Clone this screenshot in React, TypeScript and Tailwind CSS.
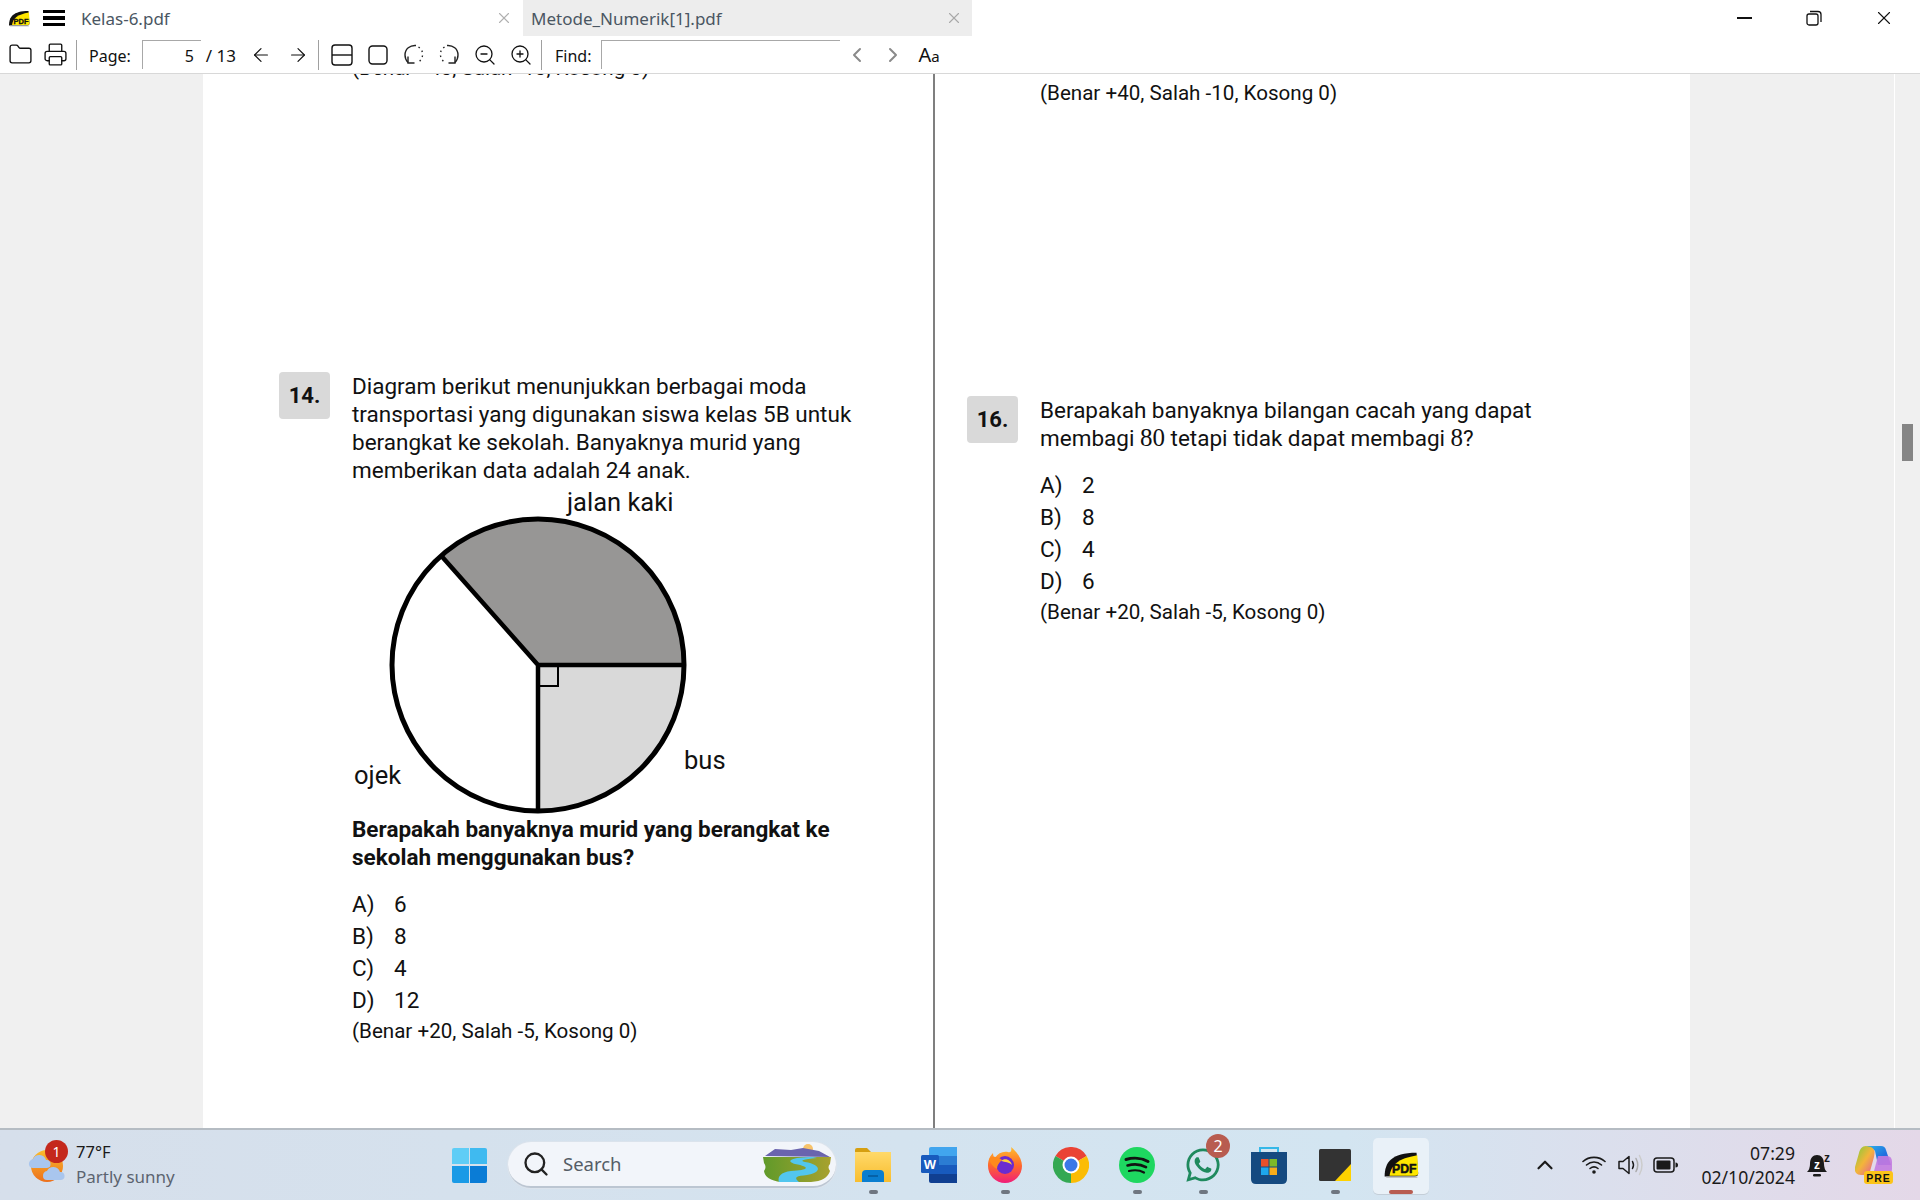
import { ArrowLeft, ArrowRight, ChevronLeft, ChevronRight, ChevronUp, Folder, Printer, Search, X, ZoomIn, ZoomOut } from 'lucide-react'
import { FaWhatsapp } from 'react-icons/fa'

const roboto = 'font-["Roboto",sans-serif]'
const ui = 'font-["Noto_Sans","Open_Sans",sans-serif]'

function PdfLogo({ w, h }: { w: number; h: number }) {
  return (
    <svg width={w} height={h} viewBox="0 0 44 34">
      <path d="M2 31C2 14 10 2 41 2L43 27Q43 31 39 31Z" fill="#111" />
      <path d="M8 30C10 17 18 9 42 5L43 27Q43 30 39 30Z" fill="#ffe600" />
      <path d="M4 32H42" stroke="#bbb" strokeWidth="1.5" />
      <text x="11" y="27" fontFamily="Liberation Sans" fontWeight="700" fontSize="15" stroke="#111" strokeWidth=".6" fill="#111">PDF</text>
    </svg>
  )
}

function SplitIcon() {
  return (
    <svg width="22" height="22" viewBox="0 0 22 22" fill="none" stroke="#111" strokeWidth="1.4">
      <rect x="1" y="1" width="20" height="20" rx="3" />
      <path d="M1 11H21" />
    </svg>
  )
}

function SquareIcon() {
  return (
    <svg width="20" height="20" viewBox="0 0 20 20" fill="none" stroke="#111" strokeWidth="1.4">
      <rect x="1" y="1" width="18" height="18" rx="3.5" />
    </svg>
  )
}

function RotateIcon({ flip }: { flip?: boolean }) {
  return (
    <svg width="21" height="21" viewBox="0 0 21 21" fill="none" stroke="#222" strokeWidth="1.4" className={flip ? '-scale-x-100' : ''}>
      <path d="M13 1.500C7 1 2 5 2 11C2 14 3 16.500 5 18.500" />
      <path d="M5 12.500V19H11.500" />
      <path d="M15.500 3C18.500 5 20 8 19.500 11.500C19 15 17 17.500 14 19" strokeDasharray="1.500 3.400" />
    </svg>
  )
}

function Restore() {
  return (
    <svg width="16" height="16" viewBox="0 0 16 16" fill="none" stroke="#111" strokeWidth="1.300">
      <rect x="1" y="4" width="11" height="11" rx="2" />
      <path d="M4 1.500H12Q15 1.500 15 4.500V12" />
    </svg>
  )
}

function Sep() {
  return <div className="h-[30px] w-px bg-[#a0a0a0]" />
}

function TitleBar() {
  return (
    <div className={`flex h-[36px] items-center ${ui}`}>
      <div className="ml-[8px] flex h-[20px] w-[22px] items-center"><PdfLogo w={22} h={17} /></div>
      <div className="ml-[13px] flex w-[22px] flex-col gap-[3px]">
        <div className="h-[3.500px] bg-black" />
        <div className="h-[3.500px] bg-black" />
        <div className="h-[3.500px] bg-black" />
      </div>
      <div className="ml-[16px] flex h-[36px] w-[442px] items-center justify-between pr-[10px] text-[17px] text-[#4a5662]">
        <span className="pt-[2px]">Kelas-6.pdf</span>
        <X size={18} strokeWidth={1.500} className="text-[#b0b0b0]" />
      </div>
      <div className="flex h-[36px] w-[449px] items-center justify-between bg-[#ededed] pr-[9px] pl-[8px] text-[17px] text-[#4a5662]">
        <span className="pt-[2px]">Metode_Numerik[1].pdf</span>
        <X size={18} strokeWidth={1.500} className="text-[#a8a8a8]" />
      </div>
      <div className="ml-auto flex items-center gap-[54px] pr-[28px]">
        <div className="h-[1.500px] w-[15px] bg-[#111]" />
        <Restore />
        <X size={22} strokeWidth={1.200} className="text-[#111] -mx-[3px]" />
      </div>
    </div>
  )
}

function Toolbar() {
  return (
    <div className={`flex h-[38px] items-center border-b border-[#d8d8d8] text-[16px] text-[#111] ${ui}`}>
      <Folder size={25} strokeWidth={1.300} className="ml-[8px]" />
      <Printer size={25} strokeWidth={1.300} className="ml-[10px]" />
      <div className="ml-[8px]"><Sep /></div>
      <span className="ml-[12px] pt-[2px]">Page:</span>
      <div className="ml-[11px] flex h-[29px] w-[59px] items-center justify-end border-t border-l border-[#a8a8a8] pt-[2px] pr-[7px]">5</div>
      <span className="ml-[5px] pt-[2px] text-[17px]">/ 13</span>
      <ArrowLeft size={22} strokeWidth={1.300} className="ml-[14px]" />
      <ArrowRight size={22} strokeWidth={1.300} className="ml-[15px]" />
      <div className="ml-[9px]"><Sep /></div>
      <div className="ml-[12px]"><SplitIcon /></div>
      <div className="ml-[15px]"><SquareIcon /></div>
      <div className="ml-[15px]"><RotateIcon /></div>
      <div className="ml-[15px]"><RotateIcon flip /></div>
      <ZoomOut size={24} strokeWidth={1.300} className="ml-[13px]" />
      <ZoomIn size={24} strokeWidth={1.300} className="ml-[12px]" />
      <div className="ml-[8px]"><Sep /></div>
      <span className="ml-[13px] pt-[2px]">Find:</span>
      <div className="ml-[10px] h-[29px] w-[239px] border-t border-l border-[#a8a8a8]" />
      <ChevronLeft size={24} strokeWidth={2} className="ml-[5px] text-[#8a8a8a]" />
      <ChevronRight size={24} strokeWidth={2} className="ml-[12px] text-[#8a8a8a]" />
      <span className="ml-[13px] text-[20px]">A<span className="text-[15px]">a</span></span>
    </div>
  )
}

function QNumber({ n }: { n: string }) {
  return (
    <div className="flex h-[47px] w-[51px] shrink-0 items-center justify-center rounded-[4px] bg-[#d9d9d9] text-[22px] font-bold text-[#111]">
      {n}
    </div>
  )
}

function Options({ items, score }: { items: [string, string][]; score: string }) {
  return (
    <div className="mt-[17px]">
      {items.map(([k, v]) => (
        <div key={k} className="flex h-[32px] items-center">
          <span className="w-[42px]">{k}</span>
          <span>{v}</span>
        </div>
      ))}
      <p className="mt-px text-[20.600px] leading-[28px]">{score}</p>
    </div>
  )
}

function PieChart() {
  return (
    <svg width="400" height="331" viewBox="0 0 400 331" className="block">
      <path d="M186 181L89 71.500A146 146 0 0 1 332 181Z" fill="#979695" />
      <path d="M186 181H332A146 146 0 0 1 186 327Z" fill="#d9d9d9" />
      <circle cx="186" cy="181" r="146" fill="none" stroke="#000" strokeWidth="5" />
      <path d="M89 71.500L186 181H332M186 181V327" fill="none" stroke="#000" strokeWidth="4.500" />
      <rect x="186" y="181" width="20" height="21" fill="none" stroke="#000" strokeWidth="2" />
      <g fontFamily="Roboto" fontSize="25.500" fill="#111">
        <text x="215" y="27">jalan kaki</text>
        <text x="2" y="300">ojek</text>
        <text x="332" y="285">bus</text>
      </g>
    </svg>
  )
}

function LeftColumn() {
  return (
    <div className="h-full w-[732px] shrink-0 overflow-hidden border-r-2 border-[#7f7f7f] pl-[76px]">
      <p className="-mt-[20px] pl-[73px] text-[20.600px] leading-[28px]">(Benar +40, Salah -10, Kosong 0)</p>
      <div className="mt-[290px] flex gap-[22px]">
        <QNumber n="14." />
        <div>
          <p>
            Diagram berikut menunjukkan berbagai moda
            <br />
            transportasi yang digunakan siswa kelas 5B untuk
            <br />
            berangkat ke sekolah. Banyaknya murid yang
            <br />
            memberikan data adalah 24 anak.
          </p>
          <PieChart />
          <p className="font-bold">
            Berapakah banyaknya murid yang berangkat ke
            <br />
            sekolah menggunakan bus?
          </p>
          <Options
            items={[['A)', '6'], ['B)', '8'], ['C)', '4'], ['D)', '12']]}
            score="(Benar +20, Salah -5, Kosong 0)"
          />
        </div>
      </div>
    </div>
  )
}

function RightColumn() {
  return (
    <div className="h-full flex-1 pl-[32px]">
      <p className="pt-[5px] pl-[73px] text-[20.600px] leading-[28px]">(Benar +40, Salah -10, Kosong 0)</p>
      <div className="mt-[289px] flex gap-[22px]">
        <QNumber n="16." />
        <div>
          <p>
            Berapakah banyaknya bilangan cacah yang dapat
            <br />
            membagi <span className="font-['Liberation_Serif',serif] text-[25px]">80</span> tetapi tidak dapat membagi <span className="font-['Liberation_Serif',serif] text-[25px]">8</span>?
          </p>
          <Options
            items={[['A)', '2'], ['B)', '8'], ['C)', '4'], ['D)', '6']]}
            score="(Benar +20, Salah -5, Kosong 0)"
          />
        </div>
      </div>
    </div>
  )
}

function WeatherIcon() {
  return (
    <svg width="40" height="40" viewBox="0 0 40 40">
      <defs>
        <linearGradient id="sun" x1="0" y1="0" x2="0" y2="1">
          <stop offset="0" stopColor="#fbbc2c" />
          <stop offset="1" stopColor="#ec6f1c" />
        </linearGradient>
      </defs>
      <circle cx="20" cy="21" r="16" fill="url(#sun)" />
      <path d="M2 20a5 5 0 0 1 4-6a7 7 0 0 1 13 1a4 4 0 0 1 1 8H6a4 4 0 0 1-4-3Z" fill="#a9c6ee" />
      <path d="M16 31a5 5 0 0 1 4-5a7 7 0 0 1 13 1a4 4 0 0 1 1 8H20a4 4 0 0 1-4-4Z" fill="#a9c6ee" />
    </svg>
  )
}

function WinLogo() {
  return (
    <div className="grid h-[35px] w-[35px] grid-cols-2 grid-rows-2 gap-[1.500px] overflow-hidden rounded-[2px]">
      <div className="bg-[#5fcdf6]" />
      <div className="bg-[#3fbaf0]" />
      <div className="bg-[#1a9ae6]" />
      <div className="bg-[#0a7cd6]" />
    </div>
  )
}

function Landscape() {
  return (
    <svg width="72" height="40" viewBox="0 0 72 40">
      <defs>
        <linearGradient id="hill" x1="0" y1="0" x2="1" y2="0">
          <stop offset="0" stopColor="#5f9a2a" />
          <stop offset="1" stopColor="#a8a12f" />
        </linearGradient>
      </defs>
      <circle cx="47" cy="5" r="5" fill="#f7c36a" />
      <path d="M4 12L14 5L30 6L42 4L58 7L69 13Z" fill="#6a64ae" />
      <path d="M2 13H70L69 20Q66 23 69 27Q66 37 50 38H20Q4 36 3 27Q6 23 3 19Z" fill="url(#hill)" />
      <path d="M52 13C30 13 24 17 34 20C50 23 48 26 30 27C20 28 16 33 18 38H38C32 33 36 32 46 31C60 29 62 21 44 18C38 17 42 15 56 14Z" fill="#52c6ee" />
    </svg>
  )
}

function FolderIcon() {
  return (
    <svg width="36" height="34" viewBox="0 0 36 34">
      <defs>
        <linearGradient id="fold" x1="0" y1="0" x2="0" y2="1">
          <stop offset="0" stopColor="#ffd96a" />
          <stop offset="1" stopColor="#f8bd2e" />
        </linearGradient>
      </defs>
      <path d="M0 2Q0 0 2 0H12L16 4H0Z" fill="#d69f10" />
      <path d="M0 4H36V34H0Z" fill="url(#fold)" />
      <path d="M7 34V26Q7 22 11 22H25Q29 22 29 26V34Z" fill="#0a7ed0" />
      <path d="M13 28H23" stroke="#05599a" strokeWidth="1.500" />
    </svg>
  )
}

function WordIcon() {
  return (
    <svg width="36" height="36" viewBox="0 0 36 36">
      <path d="M8 2Q8 0 10 0H36V9H8Z" fill="#41a5ee" />
      <rect x="8" y="9" width="28" height="9" fill="#2b7cd3" />
      <rect x="8" y="18" width="28" height="9" fill="#185abd" />
      <path d="M8 27H36V36H10Q8 36 8 34Z" fill="#103f91" />
      <rect x="0" y="8" width="18" height="18" rx="1.500" fill="#185abd" />
      <text x="9" y="22" textAnchor="middle" fontFamily="Liberation Sans" fontWeight="700" fontSize="13" fill="#fff">W</text>
    </svg>
  )
}

function FirefoxIcon() {
  return (
    <svg width="36" height="36" viewBox="0 0 36 36">
      <defs>
        <linearGradient id="ff" x1="0.500" y1="0" x2="0.500" y2="1">
          <stop offset="0" stopColor="#ffbd2e" />
          <stop offset="0.500" stopColor="#ff6a2a" />
          <stop offset="1" stopColor="#f01d7a" />
        </linearGradient>
      </defs>
      <path d="M24 0C31 6 35 12 35 19A17 17 0 0 1 1 19C1 13 3 9 6 6C6 9 7 10 8 11C11 6 16 4 21 5C24 6 25 3 24 0Z" fill="url(#ff)" />
      <circle cx="18" cy="18" r="9" fill="#6a2bd0" />
      <path d="M2 12C6 8 12 10 15 13C12 16 10 18 10 22C6 20 3 16 2 12Z" fill="#ff8a1c" />
      <path d="M14 14C18 10 24 13 25 18C22 15 18 15 14 14Z" fill="#ffcf3a" />
    </svg>
  )
}

function ChromeIcon() {
  return (
    <svg width="36" height="36" viewBox="0 0 36 36">
      <path d="M18 18L2.400 9A18 18 0 0 1 33.600 9Z" fill="#ea4335" />
      <path d="M18 18L33.600 9A18 18 0 0 1 18 36Z" fill="#fbbc04" />
      <path d="M18 18L18 36A18 18 0 0 1 2.400 9Z" fill="#34a853" />
      <circle cx="18" cy="18" r="8.500" fill="#fff" />
      <circle cx="18" cy="18" r="6.500" fill="#3b78e7" />
    </svg>
  )
}

function SpotifyIcon() {
  return (
    <svg width="36" height="36" viewBox="0 0 36 36">
      <circle cx="18" cy="18" r="18" fill="#1ed760" />
      <g fill="none" stroke="#111" strokeLinecap="round">
        <path d="M7 12.500C14 10.500 23 11 29 14.500" strokeWidth="3" />
        <path d="M8.500 18.500C14.500 16.800 22 17.400 27 20.200" strokeWidth="2.600" />
        <path d="M10 24C15 22.800 21 23.200 25 25.500" strokeWidth="2.200" />
      </g>
    </svg>
  )
}

function StoreIcon() {
  return (
    <svg width="36" height="38" viewBox="0 0 36 38">
      <path d="M9 7V2H27V7" fill="none" stroke="#35b8e8" strokeWidth="2" />
      <path d="M0 6H36V33Q36 38 31 38H5Q0 38 0 33Z" fill="#154a80" />
      <rect x="10" y="13" width="7.500" height="7.500" fill="#e8502a" />
      <rect x="18.500" y="13" width="7.500" height="7.500" fill="#7db928" />
      <rect x="10" y="21.500" width="7.500" height="7.500" fill="#1ea7ec" />
      <rect x="18.500" y="21.500" width="7.500" height="7.500" fill="#f6ac1a" />
    </svg>
  )
}

function StickyIcon() {
  return (
    <svg width="32" height="32" viewBox="0 0 32 32">
      <rect width="32" height="32" rx="1.500" fill="#333" />
      <path d="M32 15V32H16Z" fill="#ffd200" />
    </svg>
  )
}

function CopilotIcon() {
  return (
    <svg width="40" height="40" viewBox="0 0 40 40">
      <defs>
        <linearGradient id="cp1" x1="0" y1="0" x2="1" y2="1">
          <stop offset="0" stopColor="#2fb4e8" />
          <stop offset="0.600" stopColor="#1f6fe0" />
          <stop offset="1" stopColor="#7b3fd8" />
        </linearGradient>
        <linearGradient id="cp2" x1="0" y1="0" x2="1" y2="1">
          <stop offset="0" stopColor="#7ccc3c" />
          <stop offset="0.500" stopColor="#f3b53a" />
          <stop offset="1" stopColor="#e2569e" />
        </linearGradient>
      </defs>
      <path d="M12 1H27Q31 1 32 5L37 20H24L21 6Q20 4 17 4Z" fill="url(#cp1)" />
      <path d="M12 1C8 1 6 4 5 8L1 22Q0 30 7 30H15L20 12Q22 4 17 2Z" fill="url(#cp2)" />
      <path d="M24 11H33Q38 11 38 17V24Q38 30 32 30H19Z" fill="#c27be0" opacity=".9" />
      <rect x="10" y="26" width="29" height="13" rx="3" fill="#fcc419" />
      <text x="24.500" y="36.500" textAnchor="middle" fontFamily="Liberation Sans" fontWeight="700" fontSize="10.500" letterSpacing="1" fill="#111">PRE</text>
    </svg>
  )
}

function WifiIcon() {
  return (
    <svg width="24" height="20" viewBox="0 0 24 20" fill="none" stroke="#1a1a1a" strokeWidth="1.600" strokeLinecap="round">
      <path d="M1 6.500C7 1 17 1 23 6.500" />
      <path d="M4.500 10C9 6 15 6 19.500 10" />
      <path d="M8 13.500C10.500 11.500 13.500 11.500 16 13.500" />
      <circle cx="12" cy="17" r="1.800" fill="#1a1a1a" stroke="none" />
    </svg>
  )
}

function VolumeIcon() {
  return (
    <svg width="26" height="22" viewBox="0 0 26 22" fill="none" strokeWidth="1.500" strokeLinecap="round">
      <path d="M1 7.500H5L11 2.500V19.500L5 14.500H1Z" stroke="#1a1a1a" strokeLinejoin="round" />
      <path d="M14.500 7.500Q16.500 11 14.500 14.500" stroke="#1a1a1a" />
      <path d="M18 4.500Q21.500 11 18 17.500" stroke="#aaa" />
      <path d="M21.500 1.500Q26.500 11 21.500 20.500" stroke="#ccc" />
    </svg>
  )
}

function BatteryIcon() {
  return (
    <svg width="25" height="16" viewBox="0 0 25 16">
      <rect x="1" y="1" width="20" height="14" rx="3" fill="none" stroke="#1a1a1a" strokeWidth="1.500" />
      <rect x="3.500" y="3.500" width="14" height="9" rx="1" fill="#1a1a1a" />
      <path d="M22.500 5.500Q25 5.500 25 8Q25 10.500 22.500 10.500Z" fill="#1a1a1a" />
    </svg>
  )
}

function BellZ() {
  return (
    <svg width="28" height="28" viewBox="0 0 28 28">
      <path d="M2 21Q5 18 5 13C5 7 8 4 12 4C16 4 19 7 19 13Q19 18 22 21Z" fill="#1a1a1a" />
      <rect x="8" y="23" width="8" height="2.500" rx="1.200" fill="#1a1a1a" />
      <text x="12" y="18" textAnchor="middle" fontFamily="Liberation Sans" fontWeight="700" fontSize="12" fill="#fff">z</text>
      <text x="22" y="11" textAnchor="middle" fontFamily="Liberation Sans" fontWeight="700" fontSize="12" fill="#1a1a1a">z</text>
    </svg>
  )
}

function TaskIcon({ children, dot, active }: { children: React.ReactNode; dot?: boolean; active?: boolean }) {
  return (
    <div className="relative flex h-full w-[66px] items-center justify-center">
      {active && <div className="absolute top-[8px] left-[5px] h-[56px] w-[56px] rounded-[5px] bg-[#e9f1f8] shadow-[0_1px_0_#c4ced8]" />}
      <div className="relative flex">{children}</div>
      {dot && <div className="absolute top-[60px] left-[29px] h-[4px] w-[9px] rounded-full bg-[#6f7680]" />}
      {active && <div className="absolute top-[60px] left-[21px] h-[4px] w-[24px] rounded-full bg-[#b85c50]" />}
    </div>
  )
}

function Taskbar() {
  return (
    <div className={`flex h-[72px] shrink-0 items-center border-t-2 border-[#b5bcc3] bg-linear-to-r from-[#d6dfeb] via-[#d3e5f1] via-70% to-[#e4d8e8] ${ui}`}>
      <div className="flex h-full w-[452px] shrink-0 items-center pl-[27px]">
        <div className="relative">
          <WeatherIcon />
          <div className="absolute -top-[5px] left-[18px] flex h-[23px] w-[23px] items-center justify-center rounded-full bg-[#c4281c] text-[14px] leading-none text-white">1</div>
        </div>
        <div className="ml-[9px] flex flex-col">
          <span className="text-[16.500px] leading-[24px] text-[#1a1a1a]">77°F</span>
          <span className="text-[17px] leading-[26px] text-[#5c6470]">Partly sunny</span>
        </div>
      </div>
      <WinLogo />
      <div className="ml-[21px] flex h-[46px] w-[328px] shrink-0 items-center overflow-hidden rounded-full border-b-2 border-[#bcc6d2] bg-[#f2f5fa] pl-[14px] shadow-[0_0_0_1px_#dbe3ec]">
        <Search size={28} strokeWidth={2} className="text-[#222]" />
        <span className="ml-[13px] text-[18.500px] text-[#555d66]">Search</span>
        <div className="ml-auto mr-[3px] flex"><Landscape /></div>
      </div>
      <div className="ml-[4px] flex h-full shrink-0">
        <TaskIcon dot><FolderIcon /></TaskIcon>
        <TaskIcon><WordIcon /></TaskIcon>
        <TaskIcon dot><FirefoxIcon /></TaskIcon>
        <TaskIcon><ChromeIcon /></TaskIcon>
        <TaskIcon dot><SpotifyIcon /></TaskIcon>
        <TaskIcon dot>
          <FaWhatsapp size={38} color="#1f8a5e" />
          <div className="absolute -top-[12px] left-[22px] flex h-[24px] w-[24px] items-center justify-center rounded-full bg-[#b85c50] text-[16px] leading-none text-white">2</div>
        </TaskIcon>
        <TaskIcon><StoreIcon /></TaskIcon>
        <TaskIcon dot><StickyIcon /></TaskIcon>
        <TaskIcon active><PdfLogo w={36} h={28} /></TaskIcon>
      </div>
      <div className="ml-[98px] flex items-center">
        <ChevronUp size={26} strokeWidth={2} className="text-[#1a1a1a]" />
        <div className="ml-[24px] flex"><WifiIcon /></div>
        <div className="ml-[12px] flex"><VolumeIcon /></div>
        <div className="ml-[9px] flex"><BatteryIcon /></div>
        <div className="ml-[8px] flex w-[109px] flex-col items-end text-[17.600px] leading-[24px] text-[#1a1a1a]">
          <span>07:29</span>
          <span>02/10/2024</span>
        </div>
        <div className="ml-[10px] flex"><BellZ /></div>
        <div className="ml-[21px] flex"><CopilotIcon /></div>
      </div>
    </div>
  )
}

export default function App() {
  return (
    <div className="flex h-[1200px] w-[1920px] flex-col overflow-hidden bg-white">
      <div className="shrink-0">
        <TitleBar />
        <Toolbar />
      </div>
      <div className={`flex min-h-0 flex-1 bg-[#f0f0f0] ${roboto}`}>
        <div className="w-[203px] shrink-0" />
        <div className="flex w-[1487px] shrink-0 bg-white text-[22.500px] leading-[28px] text-[#111]">
          <LeftColumn />
          <RightColumn />
        </div>
        <div className="w-[204px] shrink-0" />
        <div className="w-[26px] shrink-0 border-l border-white pt-[350px] pl-[7px]">
          <div className="h-[37px] w-[11px] bg-[#858585]" />
        </div>
      </div>
      <Taskbar />
    </div>
  )
}
